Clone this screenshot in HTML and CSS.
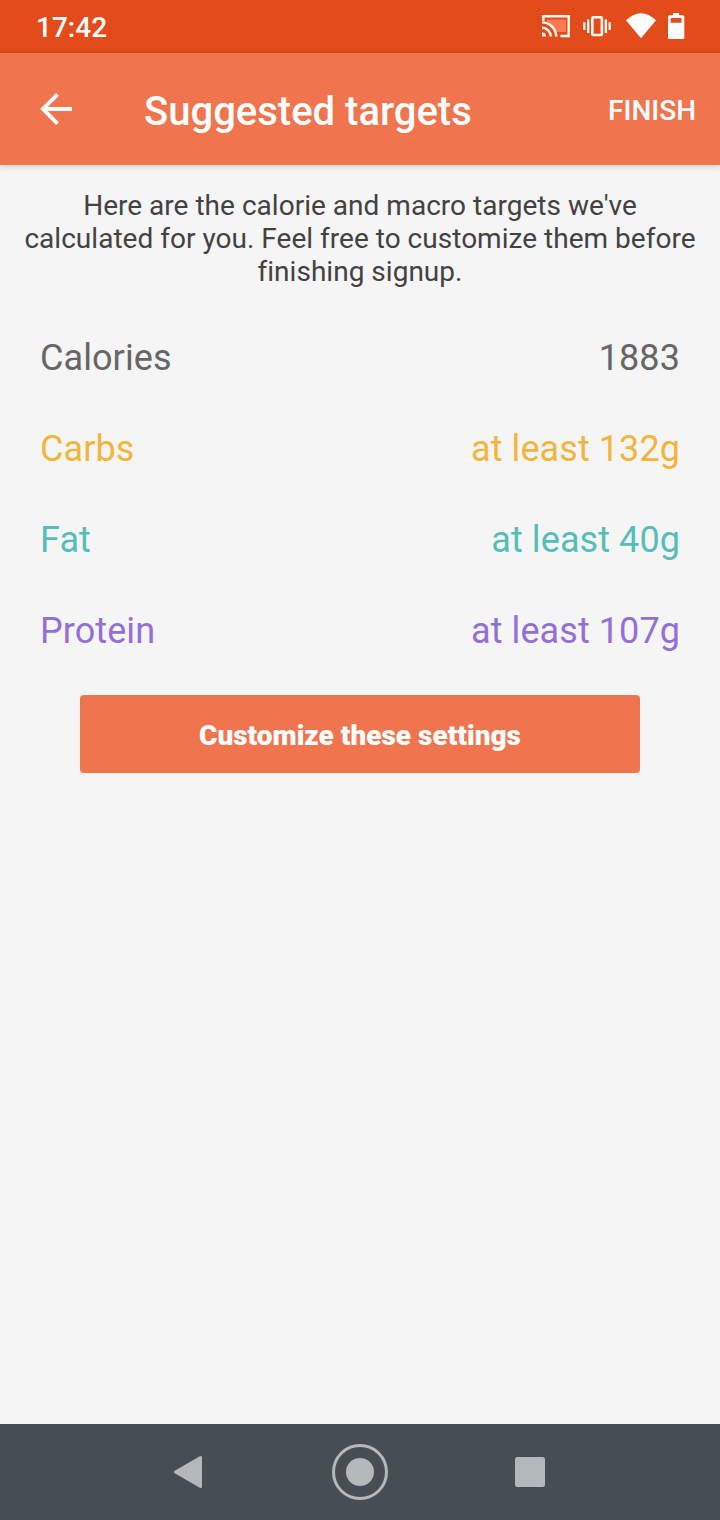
FILE: index.html
```html
<!DOCTYPE html>
<html lang="en">
<head>
<meta charset="utf-8">
<title>Suggested targets</title>
<link rel="stylesheet" href="styles.css">
</head>
<body>
<div class="screen">
  <div class="status">
    <span class="clock">17:42</span>
    <svg class="status-icons" width="150" height="33" viewBox="540 10 150 33" fill="none" stroke="#fffaf3">
      <path d="M547 19.500H566V32H556C554 28 551 26 547 25Z" fill="#ff7a50" stroke="none"/>
      <path d="M543.300 21V16.200H568.700V36H560.500M542 22.400A14.200 14.200 0 0 1 556.200 36.600M542 27.800A8.800 8.800 0 0 1 550.800 36.600" stroke-width="2.400"/>
      <path d="M542 32.600A4 4 0 0 1 546 36.600H542Z" fill="#fffaf3" stroke="none"/>
      <rect x="592.300" y="17.200" width="9.600" height="17.800" rx="1" stroke-width="2.600"/>
      <path d="M588.200 19.500V33M605.900 19.500V33M584.300 22.300V30M609.700 22.300V30" stroke-width="2.300"/>
      <path d="M641 38.300L626 20.300Q641 6.200 656 20.300Z" fill="#fff" stroke="none"/>
      <path fill-rule="evenodd" d="M673 13h6v2.300h3.800a1.500 1.500 0 0 1 1.500 1.500v20.700a1.500 1.500 0 0 1-1.500 1.500h-13.300a1.500 1.500 0 0 1-1.500-1.500V16.800a1.500 1.500 0 0 1 1.500-1.500H673ZM670.700 18V22.700H681.500V18Z" fill="#fff" stroke="none"/>
    </svg>
  </div>
  <header class="appbar">
    <svg class="back" width="34" height="34" viewBox="0 0 34 34" fill="none" stroke="#fff" stroke-width="3.900"><path d="M33 17H4M18.500 2.400L4 17L18.500 31.600"/></svg>
    <h1 class="title">Suggested targets</h1>
    <span class="finish">FINISH</span>
  </header>
  <main class="content">
    <p class="intro">Here are the calorie and macro targets we've<br>calculated for you. Feel free to customize them before<br>finishing signup.</p>
    <div class="targets">
      <div class="row calories"><span>Calories</span><span>1883</span></div>
      <div class="row carbs"><span>Carbs</span><span>at least 132g</span></div>
      <div class="row fat"><span>Fat</span><span>at least 40g</span></div>
      <div class="row protein"><span>Protein</span><span>at least 107g</span></div>
    </div>
    <button class="customize">Customize these settings</button>
  </main>
  <nav class="navbar">
    <svg width="720" height="96" viewBox="0 0 720 96" fill="#b3b8bb">
      <path d="M175.500 48L200.500 33.500V62.500Z" stroke="#b3b8bb" stroke-width="3" stroke-linejoin="round"/>
      <circle cx="360" cy="48" r="14"/>
      <circle cx="360" cy="48" r="26.500" fill="none" stroke="#b3b8bb" stroke-width="3"/>
      <rect x="515" y="33" width="30" height="30" rx="2.500"/>
    </svg>
  </nav>
</div>
</body>
</html>
```

FILE: styles.css
```css
body { margin: 0; }
.screen {
  width: 720px;
  height: 1520px;
  display: flex;
  flex-direction: column;
  background: #f5f5f5;
  font-family: Roboto, "Liberation Sans", sans-serif;
}
.status {
  height: 53px;
  box-sizing: border-box;
  padding: 0 30px 0 36px;
  display: flex;
  align-items: center;
  justify-content: space-between;
  background: #e24c1a;
}
.clock { margin-top: 2px; font-size: 28px; font-weight: 500; color: #fff; }
.status-icons { display: block; }
.appbar {
  height: 112px;
  box-sizing: border-box;
  padding: 0 24px 0 39px;
  display: flex;
  align-items: center;
  background: #f0754e;
  color: #fff;
  box-shadow: 0 1px 6px rgba(0, 0, 0, 0.2);
}
.title { margin: 6px 0 0 71px; font-size: 40px; font-weight: 500; line-height: 48px; }
.finish { margin: 3px 0 0 auto; font-size: 28px; font-weight: 500; line-height: 34px; }
.content { flex: 1; display: flex; flex-direction: column; align-items: center; }
.intro {
  margin: 24px 0 0;
  font-size: 28px;
  line-height: 33px;
  letter-spacing: 0.02px;
  text-align: center;
  white-space: nowrap;
  color: #424242;
}
.targets { align-self: stretch; padding: 24px 40px 0; }
.row {
  height: 91px;
  display: flex;
  align-items: center;
  justify-content: space-between;
  font-size: 36px;
  letter-spacing: 0.08px;
}
.calories { color: #666; }
.carbs { color: #f3b53b; }
.fat { color: #56bdb9; }
.protein { color: #946fd8; }
.customize {
  width: 560px;
  height: 78px;
  margin-top: 19px;
  padding: 2px 0 0;
  border: 0;
  border-radius: 4px;
  background: #f0754e;
  color: #fff;
  font: 900 28px Roboto, "Liberation Sans", sans-serif;
}
.navbar { height: 96px; background: #464d53; }
.navbar svg { display: block; }
```
